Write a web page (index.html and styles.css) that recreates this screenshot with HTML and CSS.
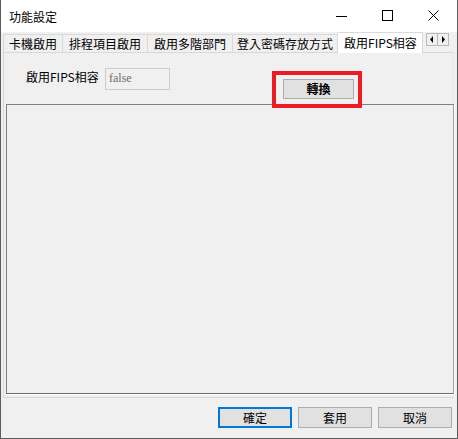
FILE: index.html
```html
<!DOCTYPE html>
<html lang="zh-Hant">
<head>
<meta charset="utf-8">
<title>功能設定</title>
<link rel="stylesheet" href="styles.css">
</head>
<body>
<div class="window">
  <div class="titlebar">
    <span class="title">功能設定</span>
    <div class="controls">
      <span class="ctl"><svg width="12" height="12" viewBox="0 0 12 12"><path d="M0 6.5H11" stroke="#000" stroke-width="1" fill="none"/></svg></span>
      <span class="ctl"><svg width="12" height="12" viewBox="0 0 12 12"><rect x="0.5" y="0.5" width="10" height="10" stroke="#000" stroke-width="1" fill="none"/></svg></span>
      <span class="ctl"><svg width="12" height="12" viewBox="0 0 12 12"><path d="M0.5 0.5L10.5 10.5M10.5 0.5L0.5 10.5" stroke="#000" stroke-width="1" fill="none"/></svg></span>
    </div>
  </div>
  <div class="tabstrip">
    <span class="tab">卡機啟用</span>
    <span class="tab">排程項目啟用</span>
    <span class="tab">啟用多階部門</span>
    <span class="tab">登入密碼存放方式</span>
    <span class="tab tab-active">啟用FIPS相容</span>
    <div class="scroller">
      <span class="arrow"><svg width="4" height="7" viewBox="0 0 4 7"><path d="M3 0V7L0 3.5Z" fill="#000"/></svg></span>
      <span class="arrow"><svg width="4" height="7" viewBox="0 0 4 7"><path d="M1 0V7L4 3.5Z" fill="#000"/></svg></span>
    </div>
  </div>
  <div class="tabpage">
    <div class="form">
      <span class="label">啟用FIPS相容</span>
      <span class="textbox">false</span>
      <span class="btn btn-convert">轉換<span class="highlight"></span></span>
    </div>
    <div class="panel"></div>
  </div>
  <div class="footer">
    <span class="btn btn-default">確定</span>
    <span class="btn">套用</span>
    <span class="btn">取消</span>
  </div>
</div>
</body>
</html>
```
FILE: styles.css
```css
* { box-sizing: border-box; }
html, body { margin: 0; padding: 0; }
body {
  width: 458px;
  height: 439px;
  font-family: "Noto Sans CJK TC", "Noto Sans", sans-serif;
  font-size: 12px;
  color: #000;
  background: #f0f0f0;
}
.window {
  width: 458px;
  height: 439px;
  background: #f0f0f0;
  border-left: 1px solid #5c5c5c;
  border-right: 1px solid #5c5c5c;
  border-bottom: 1px solid #5c5c5c;
  display: flex;
  flex-direction: column;
}
.titlebar {
  height: 32px;
  background: #fff;
  display: flex;
  align-items: center;
  flex: none;
}
.title {
  padding-left: 8px;
  line-height: 16px;
  margin-top: 1px;
}
.controls {
  margin-left: auto;
  display: flex;
  height: 32px;
}
.ctl {
  width: 46px;
  height: 32px;
  display: flex;
  align-items: center;
  justify-content: center;
}
.tabstrip {
  height: 21px;
  display: flex;
  align-items: flex-end;
  padding-left: 2px;
  flex: none;
}
.tab {
  height: 18px;
  margin-bottom: 1px;
  padding: 0 6px;
  line-height: 17px;
  border: 1px solid #d9d9d9;
  border-bottom: none;
  border-right: none;
  background: #f0f0f0;
  white-space: nowrap;
}
.tab:nth-child(4) { border-right: 1px solid #d9d9d9; padding: 0 4px 0 4px; }
.tab:first-child { padding: 0 5px; }
.tab-active {
  height: 21px;
  margin-bottom: 0;
  padding: 0 5px 0 6px;
  line-height: 20px;
  background: #fff;
  border: 1px solid #d9d9d9;
  border-bottom: none;
  border-left: none;
  position: relative;
  z-index: 1;
}
.scroller {
  align-self: flex-start;
  margin-top: 1px;
  margin-left: 3px;
  display: flex;
}
.arrow {
  width: 12px;
  height: 13px;
  border: 1px solid #b9b9b9;
  background: #f0f0f0;
  display: flex;
  align-items: center;
  justify-content: center;
}
.arrow + .arrow { margin-left: -1px; }
.tabpage {
  margin-left: 2px;
  margin-top: -1px;
  width: 451px;
  height: 346px;
  border: 1px solid #d9d9d9;
  border-right-color: #e8e8e8;
  padding: 0 0 3px 1px;
  display: flex;
  flex-direction: column;
  flex: none;
}
.form {
  height: 51px;
  display: flex;
  align-items: flex-start;
  padding-left: 21px;
  flex: none;
}
.label {
  margin-top: 15px;
  line-height: 18px;
  width: 72px;
  white-space: nowrap;
}
.textbox {
  margin-top: 15px;
  margin-left: 7px;
  width: 65px;
  height: 22px;
  border: 1px solid #cccccc;
  background: #f0f0f0;
  color: #6d6d6d;
  font-family: "Liberation Serif", serif;
  font-size: 12px;
  padding: 2px 0 0 3px;
  line-height: 14px;
}
.btn {
  width: 74px;
  height: 21px;
  background: #e1e1e1;
  border: 1px solid #adadad;
  display: flex;
  align-items: center;
  justify-content: center;
  line-height: 16px;
}
.btn-convert {
  margin-top: 26px;
  margin-left: 113px;
  width: 71px;
  height: 20px;
  position: relative;
  font-weight: bold;
}
.highlight {
  position: absolute;
  top: -9px;
  left: -12px;
  right: -9px;
  bottom: -10px;
  border: 4px solid #ec1c24;
}
.panel {
  width: 448px;
  height: 290px;
  margin-left: 1px;
  border: 1px solid #828282;
  border-right-color: #a0a0a0;
  border-bottom-color: #6e6e6e;
  box-shadow: 1px 1px 0 #fff;
  background: #f0f0f0;
  flex: none;
}
.footer {
  flex: 1;
  display: flex;
  justify-content: flex-end;
  align-items: flex-start;
  padding-top: 9px;
  padding-right: 5px;
  gap: 6px;
}
.btn-default {
  border-color: #0078d7;
  box-shadow: inset 0 0 0 1px #0078d7;
}
```
